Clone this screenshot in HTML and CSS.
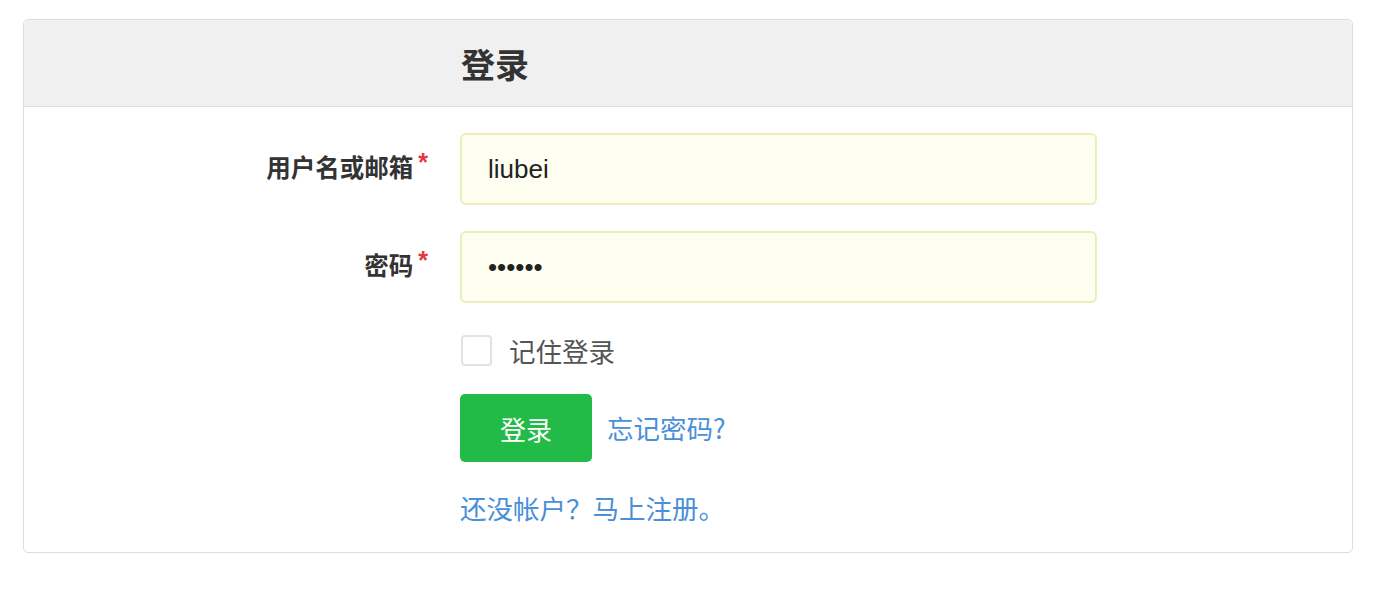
FILE: index.html
```html
<!DOCTYPE html>
<html lang="zh-CN">
<head>
<meta charset="utf-8">
<title>登录</title>
<link rel="stylesheet" href="styles.css">
</head>
<body>
<div class="panel">
  <div class="panel-heading">
    <h3 class="panel-title">登录</h3>
  </div>
  <form class="panel-body">
    <div class="form-row">
      <label class="form-label" for="username">用户名或邮箱<span class="req">*</span></label>
      <input class="form-input" id="username" type="text" value="liubei">
    </div>
    <div class="form-row">
      <label class="form-label" for="password">密码<span class="req">*</span></label>
      <input class="form-input" id="password" type="password" value="123456">
    </div>
    <div class="form-row check-row">
      <span class="form-label"></span>
      <label class="remember"><span class="checkbox"></span>记住登录</label>
    </div>
    <div class="form-row action-row">
      <span class="form-label"></span>
      <div class="actions">
        <button type="button" class="btn-login">登录</button>
        <a class="link" href="#">忘记密码?</a>
      </div>
    </div>
    <div class="form-row signup-row">
      <span class="form-label"></span>
      <a class="link" href="#">还没帐户？马上注册。</a>
    </div>
  </form>
</div>
</body>
</html>
```

FILE: styles.css
```css
html, body {
  margin: 0;
  padding: 0;
  background: #ffffff;
}

body {
  font-family: "Liberation Sans", "Noto Sans CJK SC", sans-serif;
  color: #333333;
}

.panel {
  margin: 19px 43px 0 23px;
  border: 1px solid #dddddd;
  border-radius: 5px;
  background: #ffffff;
}

.panel-heading {
  height: 87px;
  box-sizing: border-box;
  background: #f0f0f0;
  border-bottom: 1px solid #dddddd;
  border-radius: 5px 5px 0 0;
  padding-left: 437px;
  display: flex;
  align-items: center;
}

.panel-title {
  margin: 0;
  font-family: "Noto Sans CJK SC", sans-serif;
  font-size: 34px;
  font-weight: 700;
  color: #333333;
  line-height: 1;
  padding-top: 2px;
}

.panel-body {
  margin: 0;
  padding: 26px 0 26px 0;
  display: flex;
  flex-direction: column;
}

.form-row {
  display: grid;
  grid-template-columns: 408px 637px;
  column-gap: 28px;
  align-items: center;
}

.form-row + .form-row {
  margin-top: 26px;
}

.form-row.check-row {
  margin-top: 32px;
}

.form-row.action-row {
  margin-top: 28px;
}

.form-row.signup-row {
  margin-top: 28px;
}

.form-label {
  justify-self: end;
  display: flex;
  align-items: flex-start;
  font-family: "Noto Sans CJK SC", sans-serif;
  font-size: 24.5px;
  font-weight: 700;
  color: #333333;
  line-height: 30px;
  padding-right: 4px;
  margin-top: -5px;
}

.req {
  color: #e4393c;
  font-family: "Liberation Sans", sans-serif;
  font-size: 25px;
  font-weight: 700;
  line-height: 20px;
  margin-left: 5px;
  margin-top: 0px;
}

.form-input {
  box-sizing: border-box;
  width: 637px;
  height: 72px;
  margin: 0;
  padding: 0 26px;
  border: 2px solid #eaeeb8;
  border-radius: 6px;
  background: #fefff0;
  font-family: "Liberation Sans", "Noto Sans CJK SC", sans-serif;
  font-size: 26px;
  color: #222222;
  outline: none;
}

.remember {
  display: flex;
  align-items: center;
  font-family: "Noto Sans CJK SC", sans-serif;
  font-size: 26.5px;
  color: #555555;
  line-height: 30px;
}

.checkbox {
  box-sizing: border-box;
  width: 31px;
  height: 31px;
  margin-left: 1px;
  margin-right: 17px;
  border: 2px solid #e2e2e2;
  border-radius: 4px;
  background: #ffffff;
}

.actions {
  display: flex;
  align-items: center;
}

.btn-login {
  box-sizing: border-box;
  width: 132px;
  height: 68px;
  border: none;
  border-radius: 5px;
  background: #22bb47;
  color: #ffffff;
  font-family: "Noto Sans CJK SC", sans-serif;
  font-size: 26px;
  padding: 0;
  margin-right: 15px;
}

.link {
  font-family: "Noto Sans CJK SC", sans-serif;
  font-size: 26.5px;
  line-height: 36px;
  color: #4a8fd8;
  text-decoration: none;
}
```
